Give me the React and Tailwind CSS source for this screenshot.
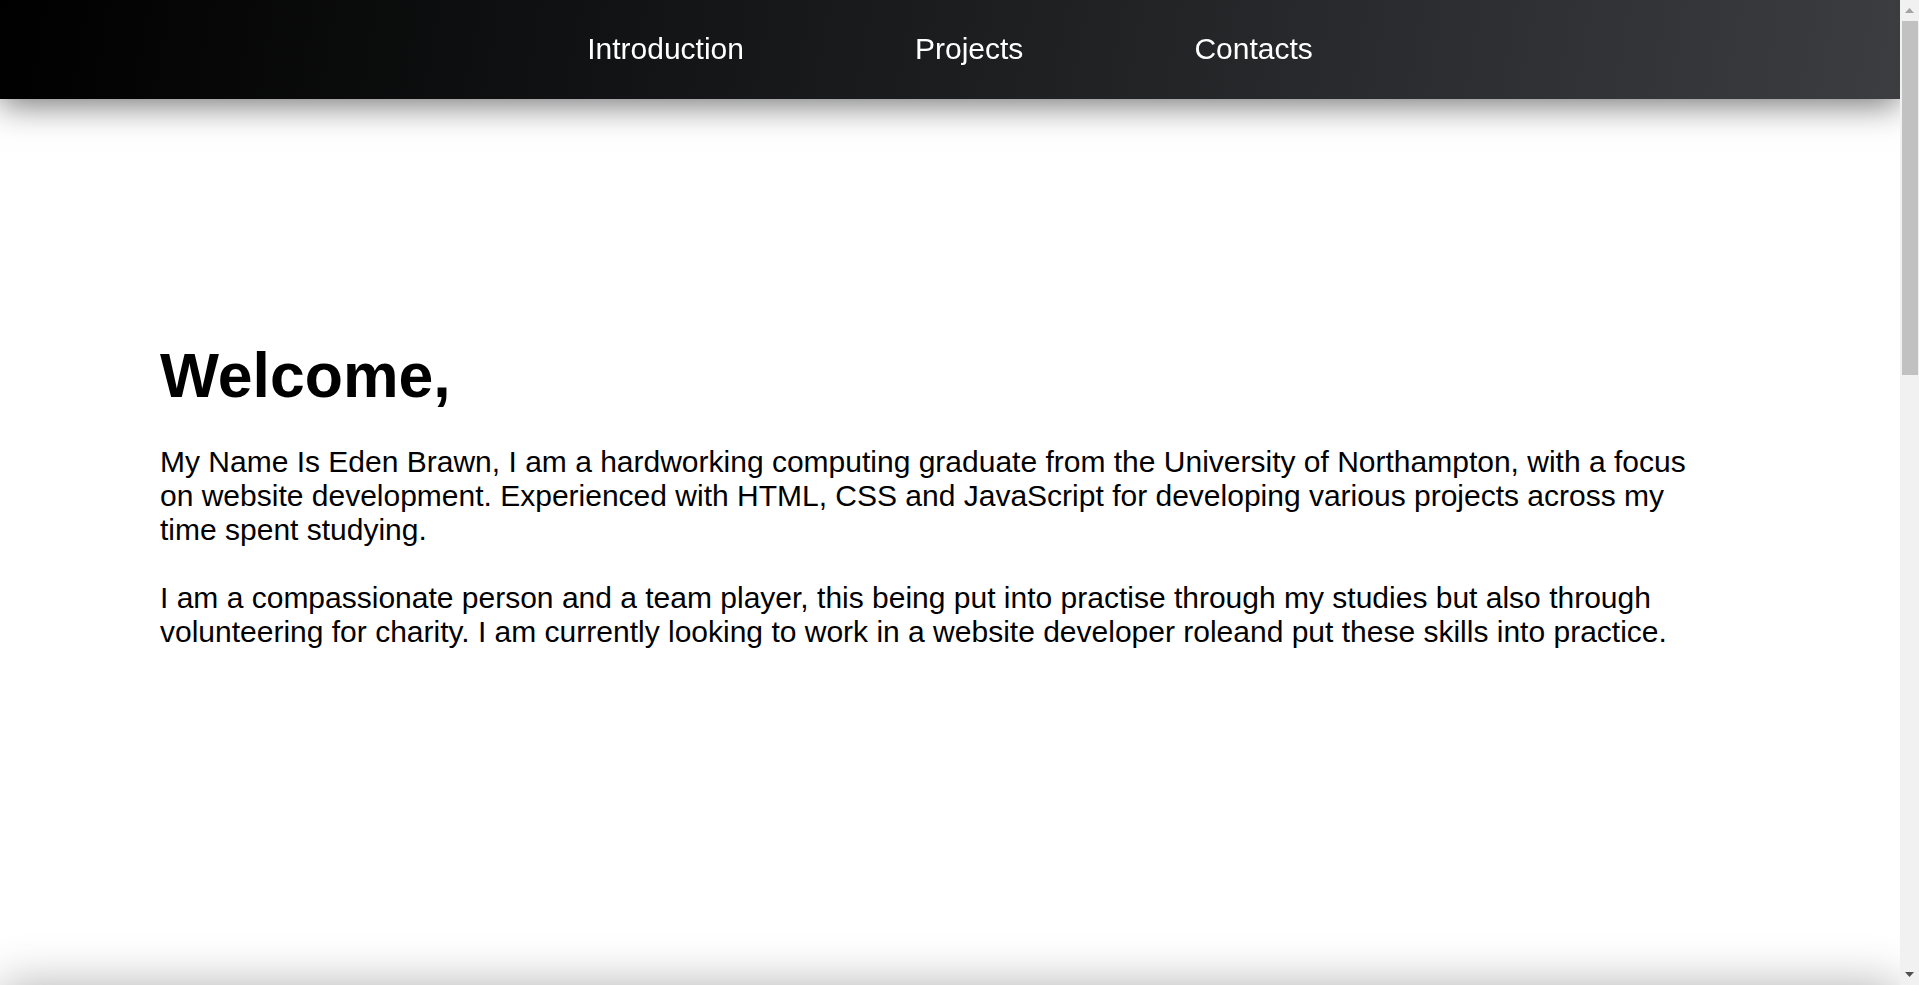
const navLinks = ["Introduction", "Projects", "Contacts"];

// the browser scrollbar seen at the right edge of the screenshot
const FakeScrollbar = () => (
  <div className="fixed top-0 right-0 bottom-0 z-30 w-[19px] bg-[#f1f1f1]">
    <svg
      className="absolute top-[8px] left-[5px]"
      width="9"
      height="5"
      viewBox="0 0 9 5"
    >
      <polygon points="4.5,0 9,5 0,5" fill="#a3a3a3" />
    </svg>
    <div className="absolute top-[21px] left-[2px] right-[1px] h-[354px] bg-[#c1c1c1]" />
    <svg
      className="absolute bottom-[8px] left-[5px]"
      width="9"
      height="5"
      viewBox="0 0 9 5"
    >
      <polygon points="0,0 9,0 4.5,5" fill="#505050" />
    </svg>
  </div>
);

const App = () => {
  return (
    <div className="bg-white pr-[19px] font-['Liberation_Sans',Arial,sans-serif] text-black">
      <header className="fixed top-0 left-0 right-[19px] z-20 h-[99px] bg-[linear-gradient(100deg,#000000_0%,#1c1d1f_50%,#3c3d41_100%)] shadow-[0_6px_32px_rgba(0,0,0,0.55)]">
        <nav className="flex h-full items-center justify-center gap-[171px] pb-[2px]">
          {navLinks.map((link) => (
            <a
              key={link}
              href={"#" + link.toLowerCase()}
              className="text-[30px] text-white no-underline"
            >
              {link}
            </a>
          ))}
        </nav>
      </header>

      <section
        id="introduction"
        className="relative z-0 flex h-screen flex-col justify-center pl-[160px]"
      >
        <h1 className="text-[62.5px] font-bold leading-tight">Welcome,</h1>
        <p className="mt-[31px] max-w-[1540px] text-[30px] leading-[34px]">
          My Name Is Eden Brawn, I am a hardworking computing graduate from the
          University of Northampton, with a focus on website development.
          Experienced with HTML, CSS and JavaScript for developing various
          projects across my time spent studying.
          <br />
          <br />I am a compassionate person and a team player, this being put
          into practise through my studies but also through volunteering for
          charity. I am currently looking to work in a website developer
          roleand put these skills into practice.
        </p>
      </section>

      <section
        id="projects"
        className="relative z-10 h-screen bg-white shadow-[0_0_45px_rgba(0,0,0,0.3)]"
      ></section>

      <FakeScrollbar />
    </div>
  );
};

export default App;
